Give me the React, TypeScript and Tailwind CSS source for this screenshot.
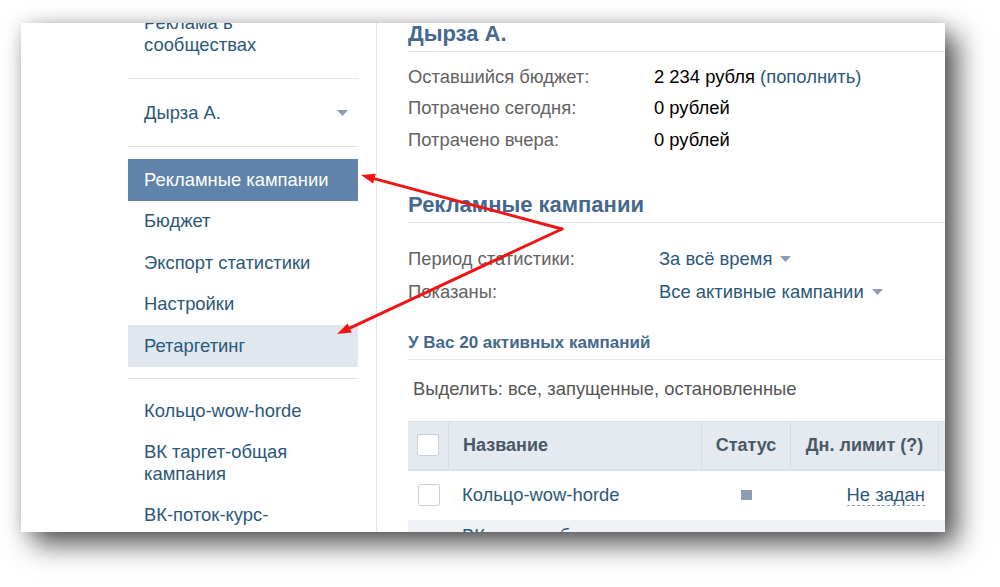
import React from 'react';

const Caret = () => (
  <svg width="11" height="6" viewBox="0 0 11 6" className="inline-block">
    <path d="M0 0h11L5.5 6z" fill="#8c9db2" />
  </svg>
);

const Check = () => (
  <div className="w-[22px] h-[22px] rounded-[2px] border border-[#c7d1dc] bg-white" />
);

const menu = [
  { label: 'Рекламные кампании', active: true },
  { label: 'Бюджет' },
  { label: 'Экспорт статистики' },
  { label: 'Настройки' },
  { label: 'Ретаргетинг', hover: true },
];

const budget = [
  { label: 'Оставшийся бюджет:', value: '2 234 рубля', link: true },
  { label: 'Потрачено сегодня:', value: '0 рублей' },
  { label: 'Потрачено вчера:', value: '0 рублей' },
];

const App = () => {
  return (
    <div className="relative w-[1000px] h-[587px] overflow-hidden bg-white pt-[23px] pl-[21px] font-['Liberation_Sans',Arial,sans-serif]">
      <div className="flex w-[924px] h-[509px] overflow-hidden bg-white shadow-[12px_12px_26px_rgba(0,0,0,0.68),0_0_14px_rgba(0,0,0,0.12)]">
        {/* Sidebar */}
        <div className="w-[356px] shrink-0 border-r border-[#dde3ea] pl-[107px]">
          <div className="w-[230px] text-[18.4px] text-[#2b587a]">
            <div className="mt-[-11px] pl-4 leading-[22px]">
              Реклама в<br />сообществах
            </div>
            <div className="mt-[22px] h-px bg-[#dce2e9]" />
            <div className="h-[67px] flex items-center justify-between pl-4 pr-[10px]">
              <span>Дырза А.</span>
              <Caret />
            </div>
            <div className="h-px bg-[#dce2e9]" />
            <div className="mt-[12px]">
              {menu.map((m) => (
                <div
                  key={m.label}
                  className={
                    m.active
                      ? 'h-[41.5px] flex items-center pl-4 bg-[#5f83aa] text-white'
                      : m.hover
                      ? 'h-[41.5px] flex items-center pl-4 bg-[#e1e7ee]'
                      : 'h-[41.5px] flex items-center pl-4'
                  }
                >
                  {m.label}
                </div>
              ))}
            </div>
            <div className="mt-[11px] h-px bg-[#dce2e9]" />
            <div className="pt-[12px] leading-[22px]">
              <div className="py-[9.5px] pl-4">Кольцо-wow-horde</div>
              <div className="py-[9.5px] pl-4">ВК таргет-общая<br />кампания</div>
              <div className="py-[9.5px] pl-4">ВК-поток-курс-</div>
            </div>
          </div>
        </div>

        {/* Content */}
        <div className="flex-1 min-w-0 pl-[31px] text-[18.4px]">
          <div className="text-[22px] font-bold text-[#45688e] leading-[22px] pb-[6px] border-b border-[#dfe5eb]">
            Дырза А.
          </div>
          <div className="mt-[9px]">
            {budget.map((r) => (
              <div key={r.label} className="h-[31.5px] flex items-center">
                <span className="w-[246px] text-[#626262]">{r.label}</span>
                <span className="text-black">
                  {r.value}
                  {r.link && <span className="text-[#2b587a]"> (пополнить)</span>}
                </span>
              </div>
            ))}
          </div>

          <div className="mt-[37px] text-[22px] font-bold text-[#45688e] leading-[24px] pb-[5px] border-b border-[#dfe5eb]">
            Рекламные кампании
          </div>
          <div className="mt-[20px]">
            <div className="h-[33px] flex items-center">
              <span className="w-[251px] text-[#626262]">Период статистики:</span>
              <span className="text-[#2b587a] flex items-center gap-[8px]">
                За всё время <Caret />
              </span>
            </div>
            <div className="h-[33px] flex items-center">
              <span className="w-[251px] text-[#626262]">Показаны:</span>
              <span className="text-[#2b587a] flex items-center gap-[8px]">
                Все активные кампании <Caret />
              </span>
            </div>
          </div>

          <div className="mt-[24px] text-[17px] font-bold text-[#45688e] leading-[20px] pb-[6px] border-b border-[#e3e8ee]">
            У Вас 20 активных кампаний
          </div>
          <div className="mt-[19px] pl-[5px] leading-[20px] text-[#555]">
            Выделить: все, запущенные, остановленные
          </div>

          {/* Table */}
          <div className="mt-[22px] w-[660px]">
            <div className="flex h-[50px] bg-[#e4eaf0] border-t border-[#d8dfe7] border-b-2 border-b-[#dae1e8] text-[18px] font-bold text-[#4a5866]">
              <div className="w-[41px] flex items-center justify-center border-r border-[#d5dde5]">
                <Check />
              </div>
              <div className="w-[253px] flex items-center pl-[14px] border-r border-[#d5dde5]">Название</div>
              <div className="w-[89px] flex items-center justify-center border-r border-[#d5dde5]">Статус</div>
              <div className="w-[148px] flex items-center justify-center border-r border-[#d5dde5]">Дн. лимит (?)</div>
              <div className="flex-1" />
            </div>
            <div className="flex h-[49px] bg-white">
              <div className="w-[41px] flex items-center justify-center">
                <Check />
              </div>
              <div className="w-[253px] flex items-center pl-[13px] text-[#2b587a]">Кольцо-wow-horde</div>
              <div className="w-[89px] flex items-center justify-center">
                <div className="w-[11px] h-[10px] bg-[#8c9db2]" />
              </div>
              <div className="w-[148px] flex items-center justify-end pr-[14px]">
                <span className="text-[#2b587a] leading-[20px] border-b border-dashed border-[#8c9db2]">Не задан</span>
              </div>
            </div>
            <div className="flex h-[49px] bg-[#f0f2f5] pt-[5px]">
              <div className="w-[41px]" />
              <div className="w-[253px] pl-[13px] text-[#2b587a] leading-[22px]">ВК таргет-общая</div>
            </div>
          </div>
        </div>
      </div>

      {/* Annotation arrows */}
      <svg className="absolute inset-0 pointer-events-none" width="1000" height="587">
        <line x1="562" y1="229" x2="374" y2="178.6" stroke="#f01414" strokeWidth="3" strokeLinecap="round" />
        <polygon points="361,175 375.8,173.8 373.2,183.4" fill="#f01414" />
        <line x1="562" y1="229" x2="349.7" y2="328.1" stroke="#f01414" strokeWidth="3" strokeLinecap="round" />
        <polygon points="337,334 351.8,332.6 347.6,323.6" fill="#f01414" />
      </svg>
    </div>
  );
};

export default App;
